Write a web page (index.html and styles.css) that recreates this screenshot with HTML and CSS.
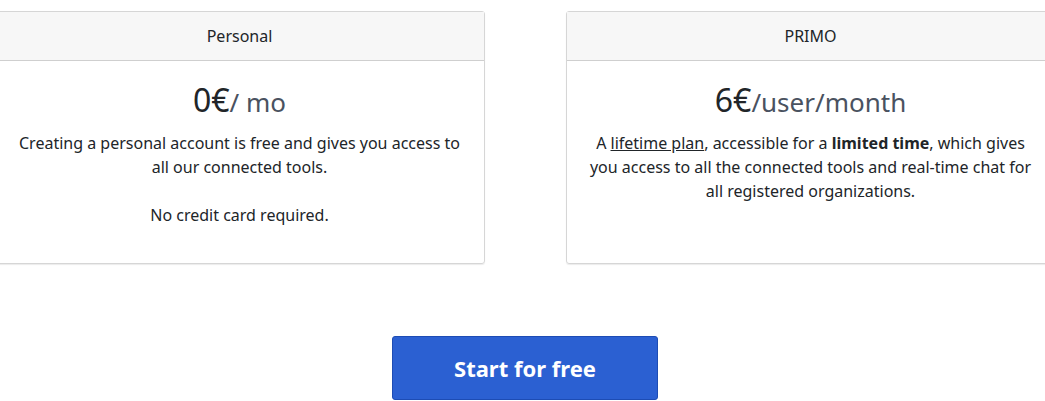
FILE: index.html
```html
<!DOCTYPE html>
<html lang="en">

<head>
    <meta charset="UTF-8">
    <meta name="viewport" content="width=device-width, initial-scale=1.0">
    <title>Pricing</title>
    <link rel="stylesheet" href="styles.css">
</head>

<body>
    <div class="pricing">
        <div class="plans">
            <div class="card">
                <div class="card-header">Personal</div>
                <div class="card-body">
                    <h1 class="price">0€<small>/ mo</small></h1>
                    <p>Creating a personal account is free and gives you access to all our connected tools.<br><br>No credit card required.</p>
                </div>
            </div>
            <div class="card">
                <div class="card-header">PRIMO</div>
                <div class="card-body">
                    <h1 class="price">6€<small>/user/month</small></h1>
                    <p>A <u>lifetime plan</u>, accessible for a <b>limited time</b>, which gives you access to all the connected tools and real-time chat for all registered organizations.</p>
                </div>
            </div>
        </div>
        <div class="actions">
            <a class="btn-start" href="#">Start for free</a>
        </div>
    </div>
</body>

</html>
```

FILE: styles.css
```css
* {
    margin: 0;
    padding: 0;
    box-sizing: border-box;
}

body {
    overflow: hidden;
    background: #fff;
    color: #212529;
    font-family: "Noto Sans", "Open Sans", sans-serif;
    font-size: 16px;
    line-height: 1.5;
}

.pricing {
    padding-top: 11px;
}

.plans {
    display: flex;
    justify-content: center;
    gap: 81px;
    margin-left: 5px;
}

.card {
    flex: 0 0 490px;
    display: flex;
    flex-direction: column;
    border: 1px solid #d6d6d6;
    border-radius: 3px;
    box-shadow: 0 1px 1px rgba(0, 0, 0, .08);
    text-align: center;
}

.card-header {
    height: 49px;
    line-height: 48px;
    background: #f7f7f7;
    border-bottom: 1px solid #cfcfcf;
    font-size: 16px;
}

.card-body {
    flex: 1;
    padding: 20px 20px 20px;
}

.price {
    font-size: 32px;
    font-weight: 400;
    line-height: 1.2;
    margin-bottom: 12px;
}

.price small {
    font-size: 26px;
    color: #4a5260;
}

.card-body p {
    margin-bottom: 16px;
}

.actions {
    display: flex;
    justify-content: center;
    margin-top: 72px;
    margin-left: 5px;
}

.btn-start {
    display: block;
    width: 266px;
    height: 64px;
    line-height: 62px;
    background: #2b60d2;
    border: 1px solid #1d4cb4;
    border-radius: 3px;
    color: #fff;
    font-size: 22px;
    font-weight: 700;
    text-decoration: none;
    text-align: center;
}
```
